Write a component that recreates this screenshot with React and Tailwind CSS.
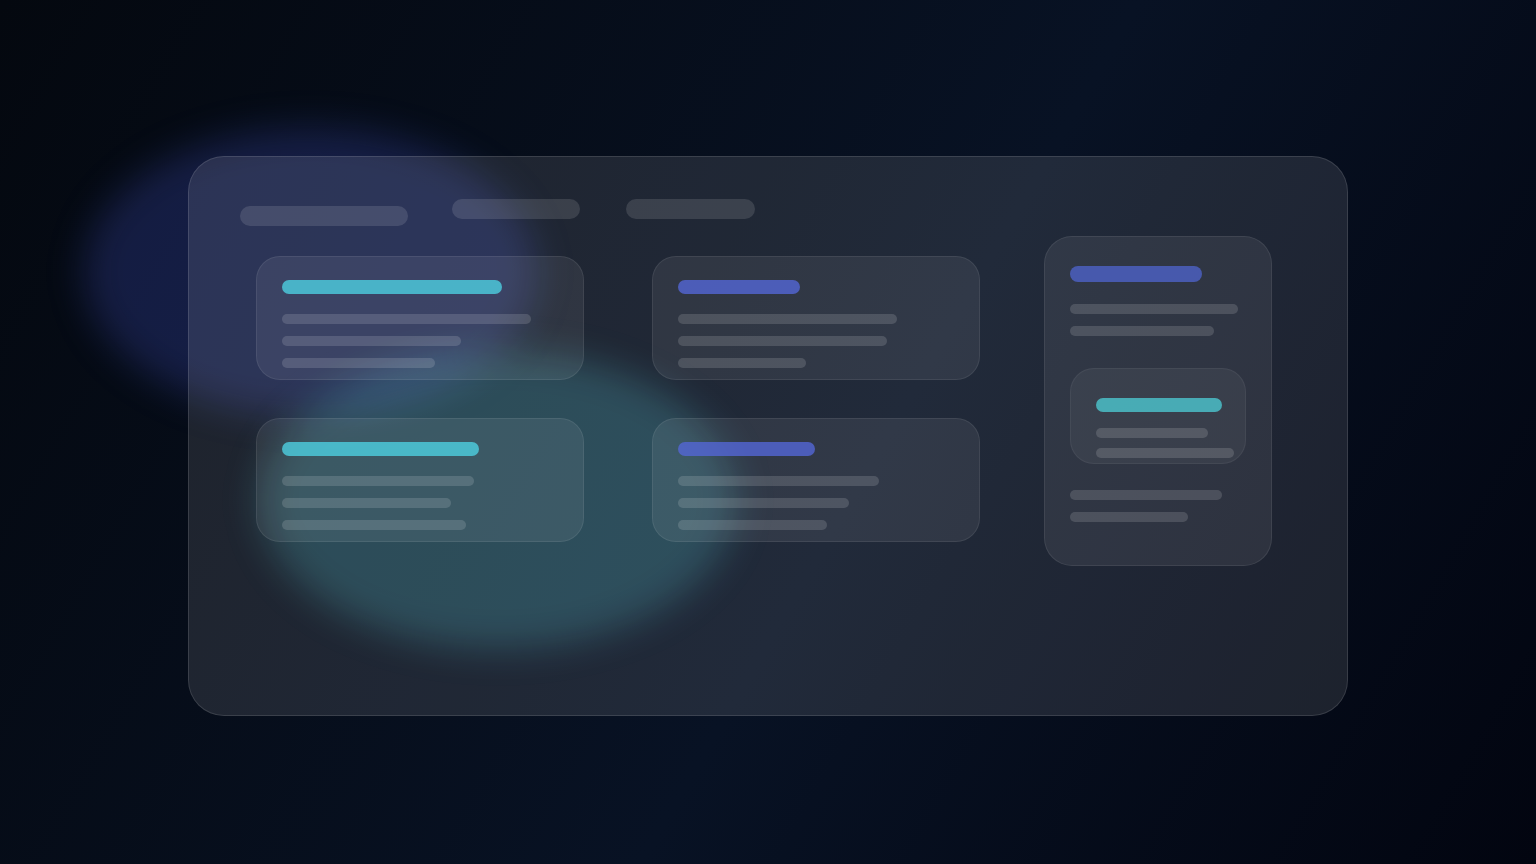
const CARDS = [
  { title: "w-[220px] bg-[#4dd0e1]/80", lines: ["w-[249px]", "w-[179px]", "w-[153px]"] },
  { title: "w-[122px] bg-[#5466d6]/80", lines: ["w-[219px]", "w-[209px]", "w-[128px]"] },
  { title: "w-[197px] bg-[#4dd0e1]/80", lines: ["w-[192px]", "w-[169px]", "w-[184px]"] },
  { title: "w-[137px] bg-[#5466d6]/80", lines: ["w-[201px]", "w-[171px]", "w-[149px]"] },
];

function Lines({ widths, className = "" }) {
  return (
    <div className={`flex flex-col gap-3 ${className}`}>
      {widths.map((width, index) => (
        <div key={index} className={`h-[10px] max-w-full rounded-full bg-white/14 ${width}`} />
      ))}
    </div>
  );
}

function Card({ title, lines }) {
  return (
    <article className="rounded-3xl bg-white/7 px-[26px] pt-6 pb-3 ring-1 ring-white/8 ring-inset">
      <div className={`h-[14px] max-w-full rounded-full ${title}`} />
      <Lines widths={lines} className="mt-5" />
    </article>
  );
}

function Sidebar() {
  return (
    <aside className="mt-[37px] w-[228px] shrink-0 self-start rounded-[28px] bg-white/7 px-[26px] pt-[30px] pb-[44px] ring-1 ring-white/8 ring-inset">
      <div className="h-4 w-[132px] rounded-full bg-[#5066d6]/72" />
      <Lines widths={["w-[168px]", "w-[144px]"]} className="mt-[22px]" />
      <div className="mt-8 rounded-3xl bg-white/5 pt-[30px] pr-3 pb-[6px] pl-[26px] ring-1 ring-white/5 ring-inset">
        <div className="h-[14px] w-[126px] rounded-full bg-[#4dd0d8]/75" />
        <div className="mt-4 flex flex-col gap-[10px]">
          <div className="h-[10px] w-[112px] rounded-full bg-white/14" />
          <div className="h-[10px] w-[138px] rounded-full bg-white/14" />
        </div>
      </div>
      <Lines widths={["w-[152px]", "w-[118px]"]} className="mt-[26px]" />
    </aside>
  );
}

export default function App() {
  return (
    <div className="relative isolate min-h-screen overflow-hidden bg-[linear-gradient(120deg,#04080f_0%,#081224_56%,#020510_100%)] px-[188px] pt-[156px] pb-[148px]">
      {/* glow behind the glass panel */}
      <div className="absolute top-[128px] left-[84px] -z-10 h-[288px] w-[452px] rounded-[50%] bg-[#4c5ee8]/22 blur-[18px]" />
      <div className="absolute top-[352px] left-[260px] -z-10 h-[296px] w-[476px] rounded-[50%] bg-[#4dd0e1]/22 blur-[18px]" />

      <main className="flex min-h-[560px] gap-16 rounded-[36px] bg-white/10 pt-[43px] pr-[76px] pl-[52px] ring-1 ring-white/12 ring-inset">
        <div className="min-w-0 flex-1">
          <header className="flex h-[27px] items-start">
            <div className="h-5 w-[168px] self-end rounded-full bg-white/12" />
            <div className="ml-11 flex gap-[46px]">
              <div className="h-5 w-32 rounded-full bg-white/12" />
              <div className="h-5 w-[129px] rounded-full bg-white/12" />
            </div>
          </header>
          <section className="mt-[30px] grid grid-cols-2 gap-x-[68px] gap-y-[38px] pl-4">
            {CARDS.map((card, index) => (
              <Card key={index} {...card} />
            ))}
          </section>
        </div>
        <Sidebar />
      </main>
    </div>
  );
}
